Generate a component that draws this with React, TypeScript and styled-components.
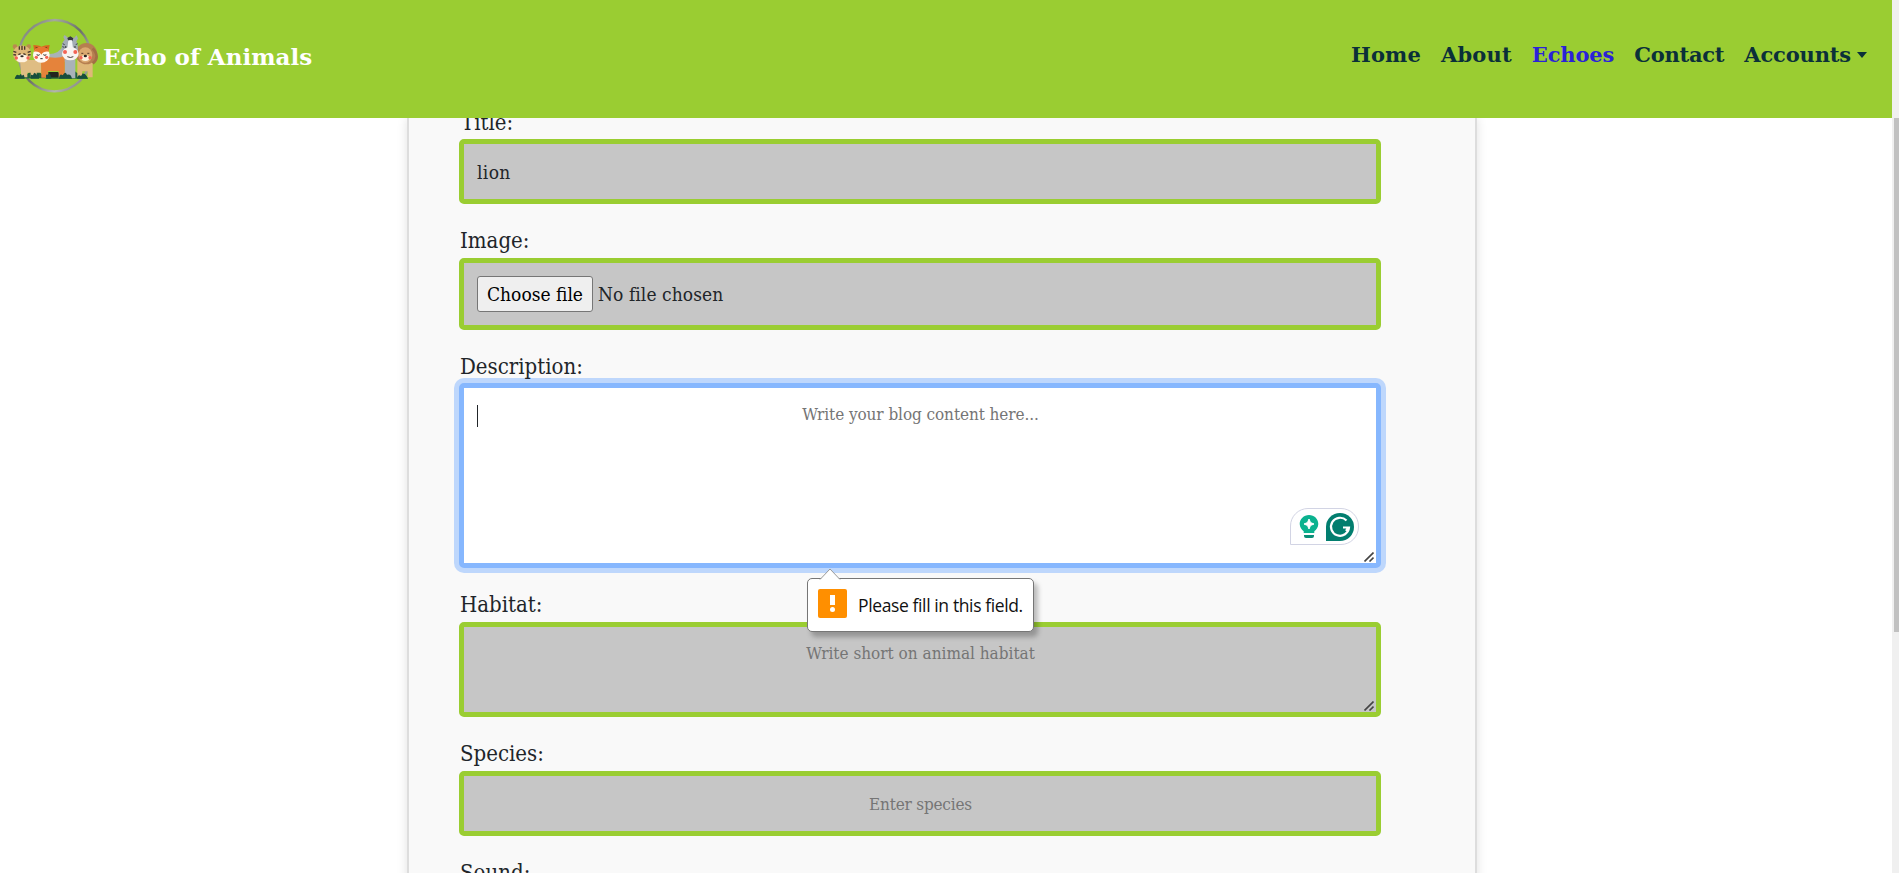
import React from 'react';
import styled, { createGlobalStyle } from 'styled-components';

const GlobalStyle = createGlobalStyle`
  * { box-sizing: border-box; }
  body { margin: 0; background: #fff; overflow: hidden; font-family: 'DejaVu Serif Condensed', 'DejaVu Serif', Georgia, serif; font-stretch: condensed; color: #212529; }
`;

const Page = styled.div`display: grid; grid-template-columns: 1fr 7px; grid-template-rows: 118px 755px; height: 873px; overflow: hidden;`;
const Header = styled.header`
  background: #9acd32; display: flex; justify-content: space-between; padding: 0 25px 0 8px; z-index: 2;
  font-family: 'DejaVu Serif', Georgia, serif; font-stretch: normal;
`;
const Brand = styled.div`display: flex; align-items: center; height: 112px; gap: 1px;`;
const BrandName = styled.span`font-size: 23px; font-weight: 700; color: #fff; line-height: 30px; padding-top: 1px;`;
const Nav = styled.nav`display: flex; align-items: center; height: 109px; gap: 20px;`;
const NavLink = styled.a<{ $active?: boolean; $track: number }>`
  display: flex; align-items: center; gap: 6px; font-size: 21px; font-weight: 700; line-height: 28px;
  color: ${p => (p.$active ? '#2a22d8' : '#0b3039')}; letter-spacing: ${p => p.$track}px;
`;
const Caret = styled.i`border: 5.5px solid transparent; border-top: 6px solid #0b3039; border-bottom: 0;`;
const Rail = styled.div`grid-row: 1 / 3; grid-column: 2; background: #f0f0f0; padding: 118px 0 0 2px;`;
const Thumb = styled.div`height: 514px; background: #c1c1c1;`;

const Main = styled.main`grid-column: 1; height: 755px; overflow: hidden; padding-left: 407px;`;
const Card = styled.form`
  width: 1070px; height: 800px; background: #f9f9f9; border: 2px solid #ddd; border-width: 0 2px;
  box-shadow: 0 0 10px rgba(0,0,0,.12); padding: 0 94px 0 50px; display: flex; flex-direction: column;
`;
const Label = styled.label<{ $h: number; $indent?: number; $base?: number }>`
  height: ${p => p.$h}px; display: flex; align-items: flex-end; flex: none; font-size: 22px; line-height: 30px;
  padding: 0 0 ${p => p.$base ?? 2}px ${p => p.$indent ?? 1}px; position: relative; z-index: 1;
`;
const Field = styled.div<{ $h: number; $focus?: boolean; $top: number; $center?: boolean }>`
  position: relative; flex: none; height: ${p => p.$h}px; border: 5px solid ${p => (p.$focus ? '#86b7fe' : '#9acd32')};
  border-radius: 5px; background: ${p => (p.$focus ? '#fff' : '#c6c6c6')};
  box-shadow: ${p => (p.$focus ? '0 0 0 5px #bed7fc' : 'none')};
  padding: ${p => p.$top}px 13px 0; display: flex; justify-content: ${p => (p.$center ? 'center' : 'flex-start')}; align-items: flex-start;
`;
const Value = styled.span`font-size: 19px; line-height: 26px; letter-spacing: .35px;`;
const FileButton = styled.button`
  height: 36px; width: 116px; padding: 0; border: 1px solid #767676; border-radius: 3px; background: #efefef; color: #000;
  font-family: inherit; font-size: 19px; font-stretch: condensed; line-height: 26px; white-space: nowrap; margin-right: 5px; letter-spacing: 0;
`;
const FileName = styled(Value)`padding-top: 5px; letter-spacing: .08px;`;
const Placeholder = styled.span<{ $track?: number }>`font-size: 17px; line-height: 24px; color: #757575; letter-spacing: ${p => p.$track ?? 0}px; padding-left: 1px;`;
const TextCursor = styled.i`position: absolute; left: 13px; top: 17px; width: 1px; height: 22px; background: #212529;`;
const GripSvg = styled.svg`position: absolute; right: 2px; bottom: 1px;`;
const Assistant = styled.div`
  position: absolute; right: 17px; bottom: 18px; width: 69px; height: 37px; border: 1px solid #d2d4e4; background: #fff;
  border-radius: 18px 18px 18px 0; display: flex; align-items: center; padding-left: 8px; gap: 7px;
`;
const Tooltip = styled.div`
  position: absolute; left: 343px; top: 190px; width: 227px; height: 54px; background: #fff; border: 1px solid #767676;
  border-radius: 5px; box-shadow: 4px 5px 5px rgba(0,0,0,.25); display: flex; align-items: flex-start; padding: 10px 0 0 10px; gap: 11px; z-index: 3;
`;
const TooltipText = styled.span`font: 17.5px/24px 'Open Sans', sans-serif; letter-spacing: -.38px; color: #111; white-space: nowrap; padding-top: 4px;`;
const Pointer = styled.svg`position: absolute; left: 11px; top: -11px;`;

const Grip = () => (
  <GripSvg width="10" height="10" viewBox="0 0 10 10" stroke="#444" strokeWidth="1.6"><path d="M.5 9.500 9.500.5M5.500 9.500l4-4" /></GripSvg>
);

const Logo = () => (
  <svg width="94" height="84" viewBox="0 0 282 252">
    <defs>
      <linearGradient id="ring" x1="0" y1="0" x2="1" y2="1">
        <stop offset="0" stopColor="#5f6664" /><stop offset=".25" stopColor="#a4a99e" /><stop offset=".5" stopColor="#6a7068" /><stop offset=".75" stopColor="#b2b6ab" /><stop offset="1" stopColor="#666a66" />
      </linearGradient>
    </defs>
    <circle cx="140" cy="125" r="107" fill="none" stroke="url(#ring)" strokeWidth="7" />
    {/* grass */}
    <path d="M20 194q10-16 18-8 8-16 20-6 12-12 22-4 12-10 20 4 10 4 14 12ZM112 194q10-20 22-10 18-14 28 0 14-16 26-6 10-12 20 0 18-8 32 16Z" fill="#1f6238" />
    {/* tiger */}
    <path d="M36 138h64v38H86v14H68v-14H58v14H40Z" fill="#dfbd83" />
    <circle cx="21" cy="98" r="7" fill="#b98a50" /><circle cx="62" cy="98" r="7" fill="#b98a50" />
    <ellipse cx="42" cy="120" rx="27" ry="26" fill="#dfb878" />
    <ellipse cx="42" cy="133" rx="19" ry="12" fill="#fff3e2" />
    <path d="M34 97v10M42 95v13M50 97v10M16 112l9 3M16 122l8 1M68 112l-9 3M68 122l-8 1M31 122l7-3M46 119l7 3" stroke="#44362a" strokeWidth="4" />
    <ellipse cx="42" cy="127" rx="5" ry="3" fill="#2d2624" />
    {/* horse body */}
    <path d="M124 120q28 0 42-25l36 28v70h-32v-50h-46Z" fill="#a9b2b8" />
    {/* fox */}
    <path d="M99 136q10-6 25-6 30 4 46-5v66h-18v-20h-32v20h-20Z" fill="#e5833b" />
    <path d="M121 174h30v16h-30Z" fill="#22251f" />
    <path d="M76 93q17 0 24 5 9-5 25-5l-5 27H80Z" fill="#d9671f" />
    <path d="M82 98l12 3-8 8ZM118 98l-12 3 8 8Z" fill="#813f1c" />
    <ellipse cx="100" cy="123" rx="25" ry="23" fill="#fff8f1" />
    <path d="M77 113q6-15 24-14 18-1 22 14-16-3-23 9-7-12-23-9Z" fill="#e87730" />
    <path d="M86 122q5 4 9 0M106 122q5 4 9 0M97 134h7" stroke="#282523" strokeWidth="3" fill="none" />
    {/* lion */}
    <path d="M208 138h46v52h-15v-18h-16v18h-15Z" fill="#dfb878" />
    <circle cx="235" cy="119" r="32" fill="#b67f50" />
    <path d="M254 103q24 26 0 45" fill="none" stroke="#a36e45" strokeWidth="8" />
    <ellipse cx="232" cy="123" rx="21" ry="23" fill="#dba970" />
    <ellipse cx="232" cy="132" rx="12" ry="9" fill="#fff0dc" />
    <ellipse cx="232" cy="126" rx="5" ry="4" fill="#292321" />
    <path d="M220 118h6M238 118h6" stroke="#5b3b29" strokeWidth="3" />
    {/* horse head */}
    <path d="M161 101q0-16 9-24l-4-8 4-6 11 9q10-4 17 0l8-8 4 10-5 8q7 12 4 34H163Z" fill="#a3acb4" />
    <path d="M178 72l9-5 9 6-3 8-6-3-6 3Z" fill="#35383b" />
    <path d="M181 79h11l4 32h-19Z" fill="#f4f5f6" />
    <path d="M164 89l6 3M163 98l6 2M209 89l-6 3" stroke="#3f464b" strokeWidth="3" />
    <ellipse cx="187" cy="119" rx="25" ry="20" fill="#f8f3f1" />
    <circle cx="173" cy="99" r="2.500" fill="#222" /><circle cx="201" cy="99" r="2.500" fill="#222" />
    <path d="M178 128q9 5 18 0" fill="none" stroke="#443e3d" strokeWidth="3" />
    <g fill="#f26355">
      <circle cx="25" cy="132" r="5" /><circle cx="60" cy="132" r="5" /><circle cx="85" cy="130" r="5" /><circle cx="116" cy="130" r="5" />
      <circle cx="171" cy="114" r="6" /><circle cx="202" cy="114" r="6" /><circle cx="219" cy="131" r="5" /><circle cx="246" cy="131" r="5" />
    </g>
    <path d="M20 194q7-20 14-6 3-15 8-2 6-11 8 8ZM68 194q-2-16 7-10 4-14 10-2 10-10 8 12ZM115 194q-4-16 5-12 7-10 10 12ZM153 194q2-18 11-10 8-14 13-2 12-4 15 12ZM207 194q3-15 12-8 10-16 21 8Z" fill="#174d3c" />
  </svg>
);

export default function App() {
  return (
    <Page>
      <GlobalStyle />
      <Header>
        <Brand><Logo /><BrandName>Echo of Animals</BrandName></Brand>
        <Nav>
          <NavLink $track={0.1}>Home</NavLink>
          <NavLink $track={0.2}>About</NavLink>
          <NavLink $track={-0.15} $active>Echoes</NavLink>
          <NavLink $track={-0.25}>Contact</NavLink>
          <NavLink $track={-0.15}>Accounts<Caret /></NavLink>
        </Nav>
      </Header>
      <Rail><Thumb /></Rail>
      <Main>
        <Card>
          <Label $h={21} $indent={2} $base={1}>Title:</Label>
          <Field $h={65} $top={15}><Value>lion</Value></Field>
          <Label $h={54}>Image:</Label>
          <Field $h={72} $top={13}><FileButton type="button">Choose file</FileButton><FileName>No file chosen</FileName></Field>
          <Label $h={53} $base={1}>Description:</Label>
          <Field $h={185} $top={14} $focus $center>
            <TextCursor />
            <Placeholder $track={-0.08}>Write your blog content here...</Placeholder>
            <Assistant>
              <svg width="20" height="24" viewBox="0 0 20 24"><path d="M10 0C4.800 0 .7 4 .7 9c0 3.500 2 5.500 4 7.300V18h10.600v-1.700c2-1.800 4-3.800 4-7.300 0-5-4.100-9-9.300-9Z" fill="#0bb28f" /><path d="m10 4 1.500 3.500L15 9l-3.500 1.500L10 14l-1.500-3.500L5 9l3.500-1.500Z" fill="#fff" stroke="#fff" /><path d="M5 20h10v1q0 2-2 2H7q-2 0-2-2Z" fill="#0a8f78" /></svg>
              <svg width="28" height="28" viewBox="0 0 28 28"><path d="M0 28V14a14 14 0 1 1 14 14Z" fill="#027e6f" /><path d="M20.500 7.500A9 9 0 1 0 23 14.500H17M20 18l2.500-3.500" fill="none" stroke="#fff" strokeWidth="2.200" /></svg>
            </Assistant>
            <Grip />
            <Tooltip>
              <Pointer width="22" height="12" viewBox="0 0 22 12"><path d="M1 11.500 11 1l10 10.500" fill="#fff" stroke="#999" /></Pointer>
              <svg width="29" height="29" viewBox="0 0 29 29"><rect width="29" height="29" rx="2" fill="#ff8f00" /><path d="M12 6h5v10h-5z" fill="#fff" /><circle cx="14.500" cy="20.500" r="2.500" fill="#fff" /></svg>
              <TooltipText>Please fill in this field.</TooltipText>
            </Tooltip>
          </Field>
          <Label $h={54}>Habitat:</Label>
          <Field $h={95} $top={14} $center><Placeholder>Write short on animal habitat</Placeholder><Grip /></Field>
          <Label $h={54}>Species:</Label>
          <Field $h={65} $top={16} $center><Placeholder $track={-0.2}>Enter species</Placeholder></Field>
          <Label $h={54}>Sound:</Label>
        </Card>
      </Main>
    </Page>
  );
}
